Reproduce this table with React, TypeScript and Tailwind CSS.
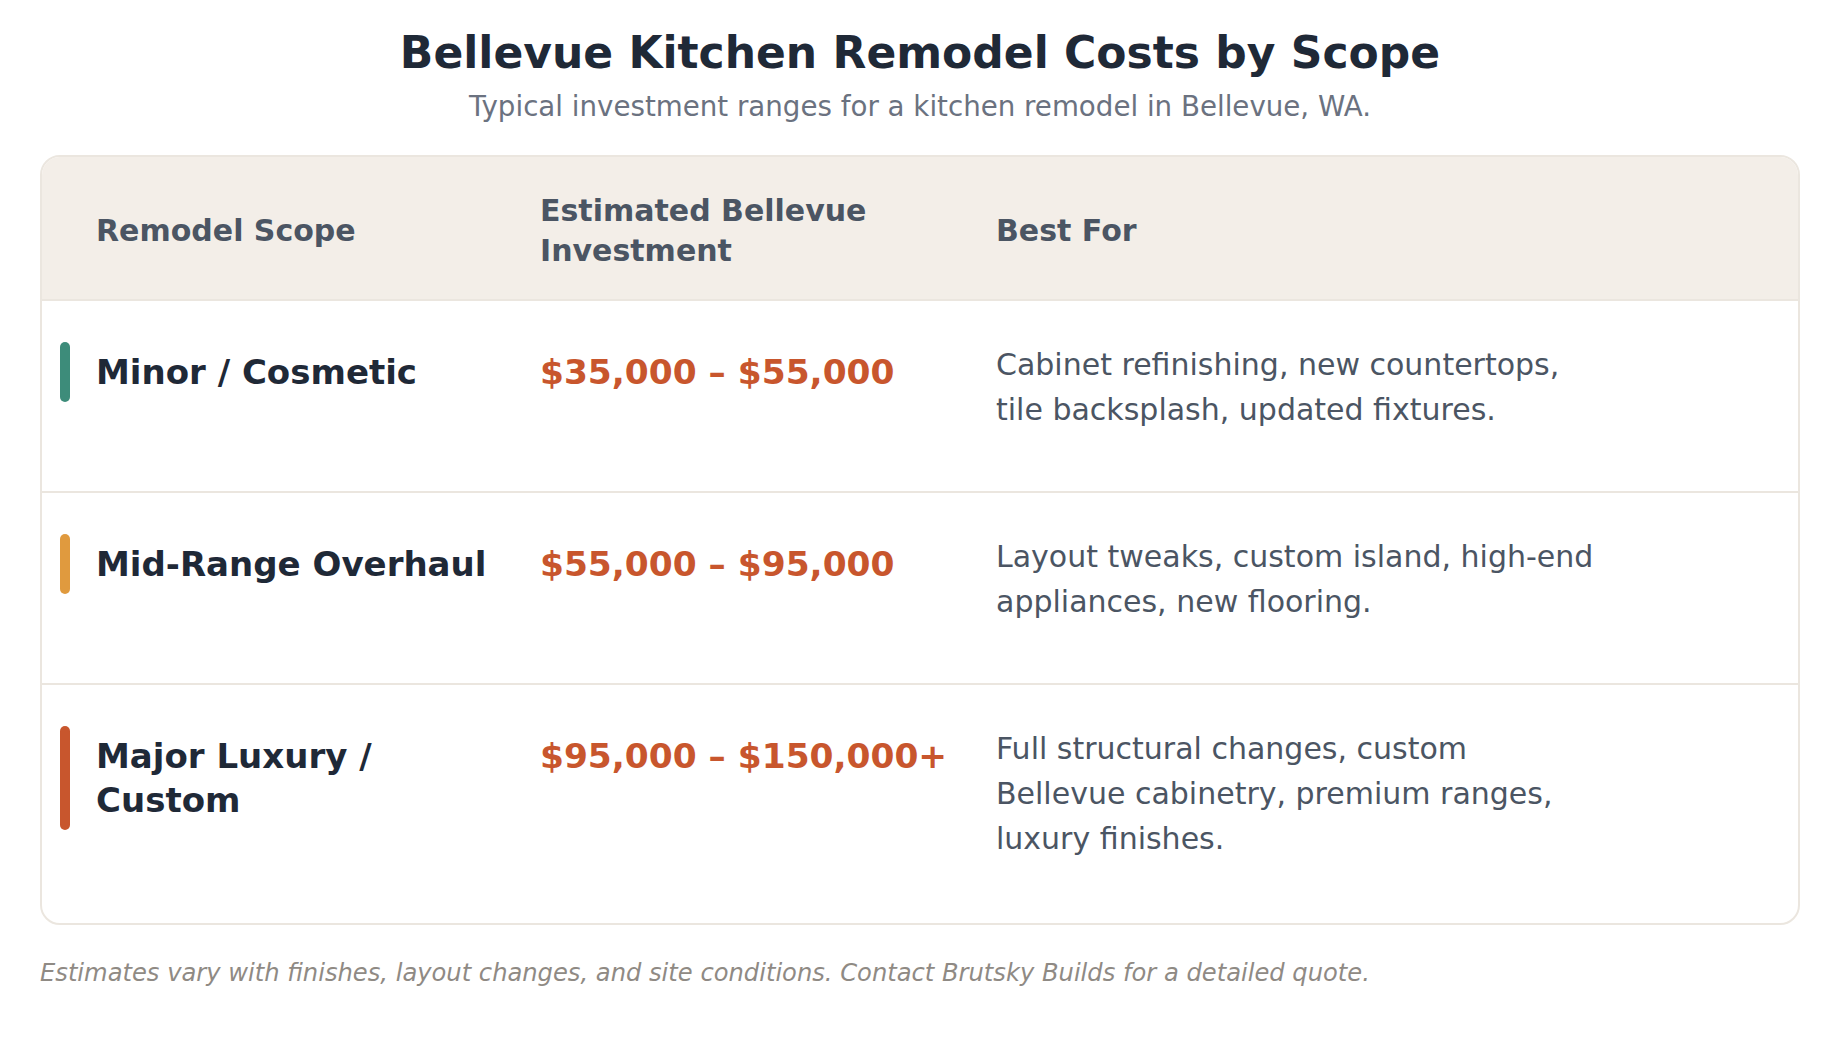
import React from "react";

const rows = [
  {
    scope: "Minor / Cosmetic",
    price: "$35,000 – $55,000",
    desc: "Cabinet refinishing, new countertops, tile backsplash, updated fixtures.",
    bar: "bg-[#3d8c7a]",
  },
  {
    scope: "Mid-Range Overhaul",
    price: "$55,000 – $95,000",
    desc: "Layout tweaks, custom island, high-end appliances, new flooring.",
    bar: "bg-[#e09a3e]",
  },
  {
    scope: "Major Luxury / Custom",
    price: "$95,000 – $150,000+",
    desc: "Full structural changes, custom Bellevue cabinetry, premium ranges, luxury finishes.",
    bar: "bg-[#c8562d]",
  },
];

export default function App() {
  return (
    <main className="min-h-screen bg-white px-[40px] pt-[27px] font-['DejaVu_Sans','Verdana',sans-serif]">
      <h1 className="text-center text-[44px] font-bold leading-[1.2] text-[#1f2937]">
        Bellevue Kitchen Remodel Costs by Scope
      </h1>
      <p className="mt-[8px] text-center text-[27.7px] leading-[1.4] text-[#6b7280]">
        Typical investment ranges for a kitchen remodel in Bellevue, WA.
      </p>

      <div className="mt-[28px] overflow-hidden rounded-[20px] border-2 border-[#ebe6df]">
        <div className="grid grid-cols-[480px_456px_1fr] items-center border-b-2 border-[#ebe6df] bg-[#f3eee8] pb-[28px] pl-[18px] pt-[34px] text-[30px] font-bold leading-[40px] text-[#4b5563]">
          <div className="pl-[36px]">Remodel Scope</div>
          <div>Estimated Bellevue Investment</div>
          <div>Best For</div>
        </div>

        {rows.map((r, i) => (
          <div
            key={r.scope}
            className={
              "grid grid-cols-[480px_456px_1fr] items-start pl-[18px] pt-[41px] " +
              (i < rows.length - 1 ? "border-b-2 border-[#ebe6df] pb-[59px]" : "pb-[62px]")
            }
          >
            <div className="flex gap-[26px] pr-[32px]">
              <span className={"w-[10px] shrink-0 rounded-full " + r.bar} />
              <span className="py-2 text-[34px] font-bold leading-[44px] text-[#1f2937]">{r.scope}</span>
            </div>
            <div className="mt-2 text-[34.4px] font-bold leading-[44px] text-[#c8562d]">{r.price}</div>
            <p className="max-w-[605px] text-[30px] leading-[45px] text-[#4b5563]">{r.desc}</p>
          </div>
        ))}
      </div>

      <p className="mt-[30px] text-[24.2px] italic leading-[1.5] text-[#8f8a84]">
        Estimates vary with finishes, layout changes, and site conditions. Contact Brutsky Builds for a detailed quote.
      </p>
    </main>
  );
}
